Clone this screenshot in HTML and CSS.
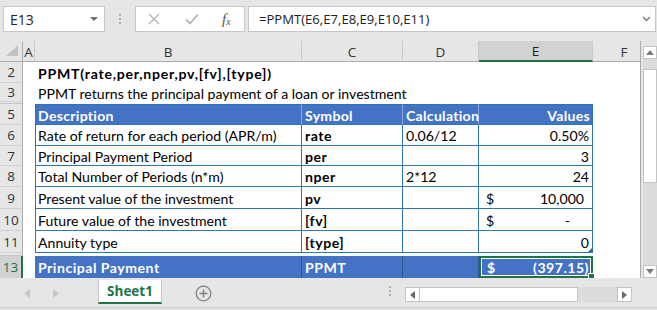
FILE: index.html
```html
<!DOCTYPE html>
<html>
<head>
<meta charset="utf-8">
<link rel="stylesheet" href="styles.css">
</head>
<body>
<div class="app">
  <div class="fbar">
    <div class="namebox"><span class="nb-text">E13</span><span class="nb-arrow"></span></div>
    <div class="vdots"><i></i><i></i><i></i></div>
    <div class="fbtns">
      <svg class="ico-x" width="12" height="12" viewBox="0 0 12 12"><path d="M1 1 L11 11 M11 1 L1 11" stroke="#b4b4b4" stroke-width="1.4" fill="none"/></svg>
      <svg class="ico-ok" width="14" height="12" viewBox="0 0 14 12"><path d="M1 6.5 L5 10.5 L13 1.5" stroke="#b4b4b4" stroke-width="1.8" fill="none"/></svg>
      <span class="fx">f<sub>x</sub></span>
    </div>
    <div class="finput"><span class="ftext">=PPMT(E6,E7,E8,E9,E10,E11)</span>
      <svg class="chev" width="9" height="6" viewBox="0 0 9 6"><path d="M1 1 L4.5 4.5 L8 1" stroke="#808080" stroke-width="1.5" fill="none"/></svg>
    </div>
  </div>

  <div class="main">
    <div class="sheet">
      <!-- column headers -->
      <div class="ch corner"><svg width="16" height="12" viewBox="0 0 16 12"><path d="M15 0 L15 11 L3 11 Z" fill="#c2c2c2"/></svg></div>
      <div class="ch">A</div>
      <div class="ch">B</div>
      <div class="ch">C</div>
      <div class="ch">D</div>
      <div class="ch ch-sel">E</div>
      <div class="ch ch-f">F</div>

      <!-- row 2 -->
      <div class="rh">2</div>
      <div class="c"></div>
      <div class="c title">PPMT(rate,per,nper,pv,[fv],[type])</div>
      <div class="c"></div><div class="c"></div><div class="c"></div><div class="c cf"></div>

      <!-- row 3 -->
      <div class="rh">3</div>
      <div class="c"></div>
      <div class="c">PPMT returns the principal payment of a loan or investment</div>
      <div class="c"></div><div class="c"></div><div class="c"></div><div class="c cf"></div>

      <!-- hidden row 4 -->
      <div class="hid"><div class="hid-h"></div></div>

      <!-- row 5 -->
      <div class="rh">5</div>
      <div class="c"></div>
      <div class="c th tl tt">Description</div>
      <div class="c th tt">Symbol</div>
      <div class="c th tt">Calculation</div>
      <div class="c th tt te right">Values</div>
      <div class="c cf"></div>

      <!-- row 6 -->
      <div class="rh">6</div>
      <div class="c"></div>
      <div class="c t tl">Rate of return for each period (APR/m)</div>
      <div class="c t b">rate</div>
      <div class="c t">0.06/12</div>
      <div class="c t right">0.50%</div>
      <div class="c cf"></div>

      <!-- row 7 -->
      <div class="rh">7</div>
      <div class="c"></div>
      <div class="c t tl">Principal Payment Period</div>
      <div class="c t b">per</div>
      <div class="c t"></div>
      <div class="c t right">3</div>
      <div class="c cf"></div>

      <!-- row 8 -->
      <div class="rh">8</div>
      <div class="c"></div>
      <div class="c t tl">Total Number of Periods (n*m)</div>
      <div class="c t b">nper</div>
      <div class="c t">2*12</div>
      <div class="c t right">24</div>
      <div class="c cf"></div>

      <!-- row 9 -->
      <div class="rh">9</div>
      <div class="c"></div>
      <div class="c t tl">Present value of the investment</div>
      <div class="c t b">pv</div>
      <div class="c t"></div>
      <div class="c t acc"><span>$</span><span>10,000</span></div>
      <div class="c cf"></div>

      <!-- row 10 -->
      <div class="rh">10</div>
      <div class="c"></div>
      <div class="c t tl">Future value of the investment</div>
      <div class="c t b">[fv]</div>
      <div class="c t"></div>
      <div class="c t acc"><span>$</span><span class="dash">-</span></div>
      <div class="c cf"></div>

      <!-- row 11 -->
      <div class="rh">11</div>
      <div class="c"></div>
      <div class="c t tl">Annuity type</div>
      <div class="c t b">[type]</div>
      <div class="c t"></div>
      <div class="c t right mark">0</div>
      <div class="c cf"></div>

      <!-- hidden row 12 -->
      <div class="hid hid12"><div class="hid-h"></div></div>

      <!-- row 13 -->
      <div class="rh rh-sel">13</div>
      <div class="c"></div>
      <div class="c tf tl">Principal Payment</div>
      <div class="c tf">PPMT</div>
      <div class="c tf"></div>
      <div class="c tf sel"><span>$</span><span>(397.15)</span><i class="handle"></i></div>
      <div class="c cf"></div>
    </div>

    <div class="vscroll">
      <div class="sb-btn"><svg width="8" height="5" viewBox="0 0 8 5"><path d="M0 5 L4 0 L8 5 Z" fill="#7a7a7a"/></svg></div>
      <div class="vtrack">
        <div class="vthumb"></div>
      </div>
      <div class="sb-btn"><svg width="8" height="5" viewBox="0 0 8 5"><path d="M0 0 L4 5 L8 0 Z" fill="#7a7a7a"/></svg></div>
    </div>
  </div>

  <div class="tabbar">
    <div class="navs">
      <svg width="6" height="9" viewBox="0 0 6 9"><path d="M6 0 L0 4.5 L6 9 Z" fill="#c6c6c6"/></svg>
      <svg width="6" height="9" viewBox="0 0 6 9"><path d="M0 0 L6 4.5 L0 9 Z" fill="#c6c6c6"/></svg>
    </div>
    <div class="tab">Sheet1</div>
    <div class="addsheet"><svg width="17" height="17" viewBox="0 0 17 17"><circle cx="8.5" cy="8.5" r="7.3" stroke="#7f7f7f" stroke-width="1.3" fill="none"/><path d="M8.5 4.5 V12.5 M4.5 8.5 H12.5" stroke="#7f7f7f" stroke-width="1.5"/></svg></div>
    <div class="hdots"><i></i><i></i><i></i></div>
    <div class="hscroll">
      <div class="sb-btn"><svg width="5" height="8" viewBox="0 0 5 8"><path d="M5 0 L0 4 L5 8 Z" fill="#6a6a6a"/></svg></div>
      <div class="hthumb"></div>
      <div class="htrack"></div>
      <div class="sb-btn"><svg width="5" height="8" viewBox="0 0 5 8"><path d="M0 0 L5 4 L0 8 Z" fill="#6a6a6a"/></svg></div>
    </div>
  </div>
  <div class="status"></div>
</div>
</body>
</html>
```
FILE: styles.css
```css
* { box-sizing: border-box; }
html, body { margin: 0; padding: 0; }
body {
  width: 657px;
  height: 310px;
  overflow: hidden;
  background: #e6e6e6;
  font-family: "Segoe UI", "Open Sans", "Noto Sans", sans-serif;
}
.app { display: flex; flex-direction: column; width: 657px; height: 310px; }

/* formula bar */
.fbar {
  height: 41px;
  display: flex;
  align-items: flex-start;
  padding: 6px 1px 0 3px;
  background: #e6e6e6;
}
.namebox {
  width: 102px;
  height: 26px;
  background: #fff;
  border: 1px solid #c6c6c6;
  display: flex;
  align-items: center;
  justify-content: space-between;
  padding: 0 6px 0 6px;
}
.nb-text { font-size: 14px; color: #222; }
.nb-arrow {
  width: 0; height: 0;
  border-left: 4px solid transparent;
  border-right: 4px solid transparent;
  border-top: 4px solid #707070;
}
.vdots {
  width: 30px;
  height: 26px;
  display: flex;
  flex-direction: column;
  align-items: center;
  justify-content: center;
  gap: 2px;
}
.vdots i, .hdots i { display: block; width: 2px; height: 2px; background: #b0b0b0; }
.fbtns {
  width: 110px;
  height: 26px;
  background: #fff;
  border: 1px solid #c6c6c6;
  display: flex;
  align-items: center;
  padding-left: 12px;
}
.ico-x { margin-right: 25px; }
.ico-ok { margin-right: 23px; }
.fx {
  font-family: "Liberation Serif", "DejaVu Serif", serif;
  font-style: italic;
  font-size: 15px;
  color: #555;
  line-height: 1;
}
.fx sub { font-size: 10px; vertical-align: -1px; }
.finput {
  margin-left: 3px;
  width: 408px;
  height: 26px;
  background: #fff;
  border: 1px solid #c6c6c6;
  display: flex;
  align-items: center;
  justify-content: space-between;
  padding: 0 4px 0 10px;
}
.ftext { font-size: 13.1px; color: #222; }

/* sheet */
.main { display: flex; height: 237px; background: #fff; }
.sheet {
  width: 641px;
  display: grid;
  grid-template-columns: 23px 12px 267px 101px 76px 114px 48px;
  grid-template-rows: 21px 21px 19px 2px 21px 21px 20px 21px 22px 22px 22px 3px 22px;
  background: #fff;
  border-right: 1px solid #ababab;
  overflow: hidden;
}
.ch {
  background: #e6e6e6;
  border-right: 1px solid #c9c9c9;
  border-bottom: 1px solid #ababab;
  display: flex;
  align-items: center;
  justify-content: center;
  font-size: 13.5px;
  color: #333;
  padding-top: 1px;
}
.corner { justify-content: flex-end; align-items: flex-end; padding: 0 3px 4px 0; border-right-color: #ababab; }
.ch-sel { background: #d2d2d2; border-bottom: 2px solid #217346; color: #222; }
.ch-f { border-right: none; padding-left: 14px; }

.rh {
  background: #e6e6e6;
  border-right: 1px solid #ababab;
  border-bottom: 1px solid #d0d0d0;
  display: flex;
  align-items: center;
  justify-content: center;
  font-size: 13.5px;
  color: #333;
}
.rh-sel { background: #d2d2d2; border-right: 2px solid #217346; color: #217346; border-bottom: none; }

.hid { grid-column: 1 / -1; display: flex; background: #fff; }
.hid-h { width: 23px; height: 100%; background: #e6e6e6; border-right: 1px solid #ababab; border-bottom: 1px solid #c4c4c4; }

.c {
  font-family: "Lato", "Carlito", sans-serif;
  font-size: 14.1px;
  color: #000;
  white-space: nowrap;
  display: flex;
  align-items: center;
  padding: 1px 3px 0 3px;
  min-width: 0;
}
.title, .b, .th, .tf { font-weight: bold; }
.title { letter-spacing: 0.75px; }
.b, .tf { letter-spacing: 0.5px; }
.th { letter-spacing: 0.28px; }
.right { justify-content: flex-end; }
.t { border-right: 1px solid #2e75b6; border-bottom: 1px solid #2e75b6; }
.tl { border-left: 1px solid #2e75b6; padding-left: 2px; }
.th {
  background: #4472c4;
  color: #fff;
  border-right: 1px solid #8eaadb;
  border-bottom: 1px solid #2e75b6;
}
.tt { border-top: 1px solid #2e75b6; }
.th.tl { border-left: 1px solid #2e75b6; }
.th.te { border-right: 1px solid #2e75b6; padding-right: 2px; }
.tf {
  background: #4472c4;
  color: #fff;
  border-right: 1px solid #2f5597;
}
.tf.tl { border-left: 1px solid #4472c4; }
.acc { justify-content: space-between; padding-left: 7px; padding-right: 8px; }
.dash { padding-right: 14px; }
.mark { position: relative; }
.mark::after {
  content: "";
  position: absolute;
  right: 0;
  bottom: 0;
  border-left: 4px solid transparent;
  border-bottom: 4px solid #2e5fa8;
}
.sel {
  position: relative;
  justify-content: space-between;
  border: 2px solid #217346;
  box-shadow: inset 0 0 0 1px #fff;
  padding-left: 6px;
  padding-right: 2px;
  letter-spacing: 0.5px;
}
.handle {
  position: absolute;
  right: -4px;
  bottom: -4px;
  width: 7px;
  height: 7px;
  background: #217346;
  border: 1px solid #fff;
}

/* vertical scrollbar */
.vscroll {
  width: 16px;
  background: #e6e6e6;
  display: flex;
  flex-direction: column;
  padding: 5px 0 0 2px;
}
.sb-btn {
  background: #fff;
  border: 1px solid #c4c4c4;
  display: flex;
  align-items: center;
  justify-content: center;
}
.vscroll .sb-btn { height: 13px; }
.vtrack { flex: 1; background: #dcdcdc; padding-top: 10px; }
.vthumb { height: 114px; background: #fff; border: 1px solid #c4c4c4; }

/* tab bar */
.tabbar {
  height: 29px;
  display: flex;
  align-items: flex-start;
  background: #e6e6e6;
}
.navs {
  width: 98px;
  display: flex;
  gap: 23px;
  padding: 11px 0 0 24px;
}
.tab {
  margin-top: 2px;
  width: 64px;
  height: 24px;
  background: #fff;
  border: 1px solid #c6c6c6;
  border-top: none;
  border-bottom: 2px solid #217346;
  color: #217346;
  font-weight: bold;
  font-size: 13.5px;
  display: flex;
  align-items: center;
  justify-content: center;
}
.addsheet { margin: 7px 0 0 33px; width: 17px; height: 17px; }
.hdots {
  margin: 8px 0 0 177px;
  display: flex;
  flex-direction: column;
  gap: 2px;
}
.hscroll {
  margin: 9px 0 0 14px;
  width: 227px;
  height: 15px;
  display: flex;
}
.hscroll .sb-btn { width: 15px; height: 15px; }
.hthumb { width: 158px; background: #fff; border: 1px solid #c4c4c4; border-left: none; }
.htrack { flex: 1; background: #dcdcdc; }
.status { height: 3px; background: #dedede; border-top: 1px solid #cfcfcf; }
```
